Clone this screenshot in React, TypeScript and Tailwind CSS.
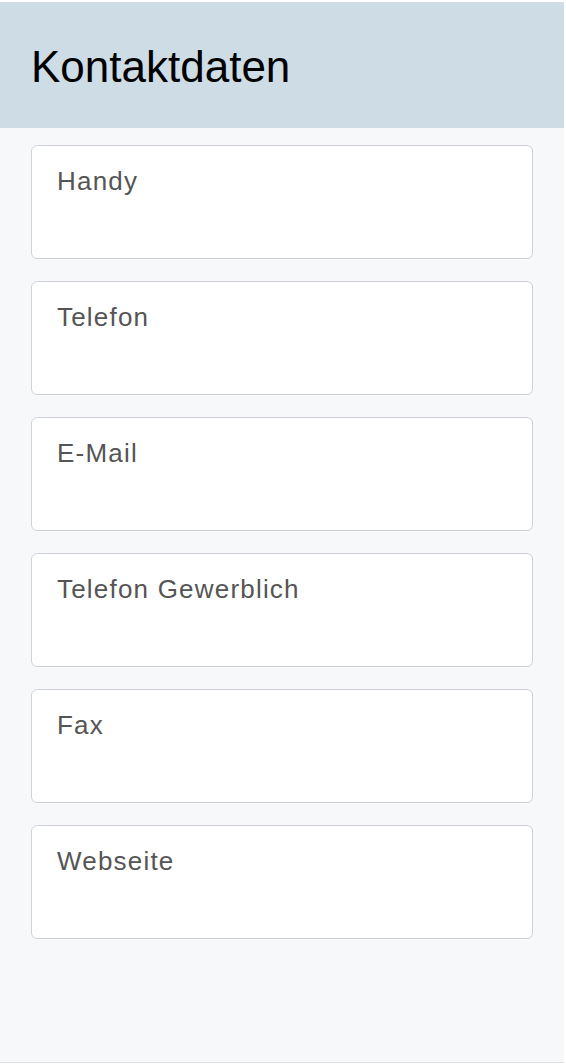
const FIELDS = ['Handy', 'Telefon', 'E-Mail', 'Telefon Gewerblich', 'Fax', 'Webseite'];

export default function App() {
  return (
    <div className="w-[566px] h-[1064px] bg-white pt-[2px] font-['Liberation_Sans',Arial,sans-serif]">
      <div className="w-[564px] h-[1061px] flex flex-col bg-[#f7f8f9] border-b border-[#dcdfe3]">
        <div className="h-[126px] bg-[#cedce5] flex items-center pl-[31px]">
          <h1 className="text-[44px] leading-none text-black pt-[4px]">Kontaktdaten</h1>
        </div>
        <div className="flex flex-col gap-[22px] pt-[17px] px-[31px]">
          {FIELDS.map((label) => (
            <div
              key={label}
              className="h-[114px] w-[502px] rounded-[6px] border-[1.5px] border-[#cfd3d8] bg-white px-[25px] pt-[20px]"
            >
              <span className="text-[26px] leading-[30px] tracking-[1.2px] text-[#555555]">{label}</span>
            </div>
          ))}
        </div>
      </div>
    </div>
  );
}
